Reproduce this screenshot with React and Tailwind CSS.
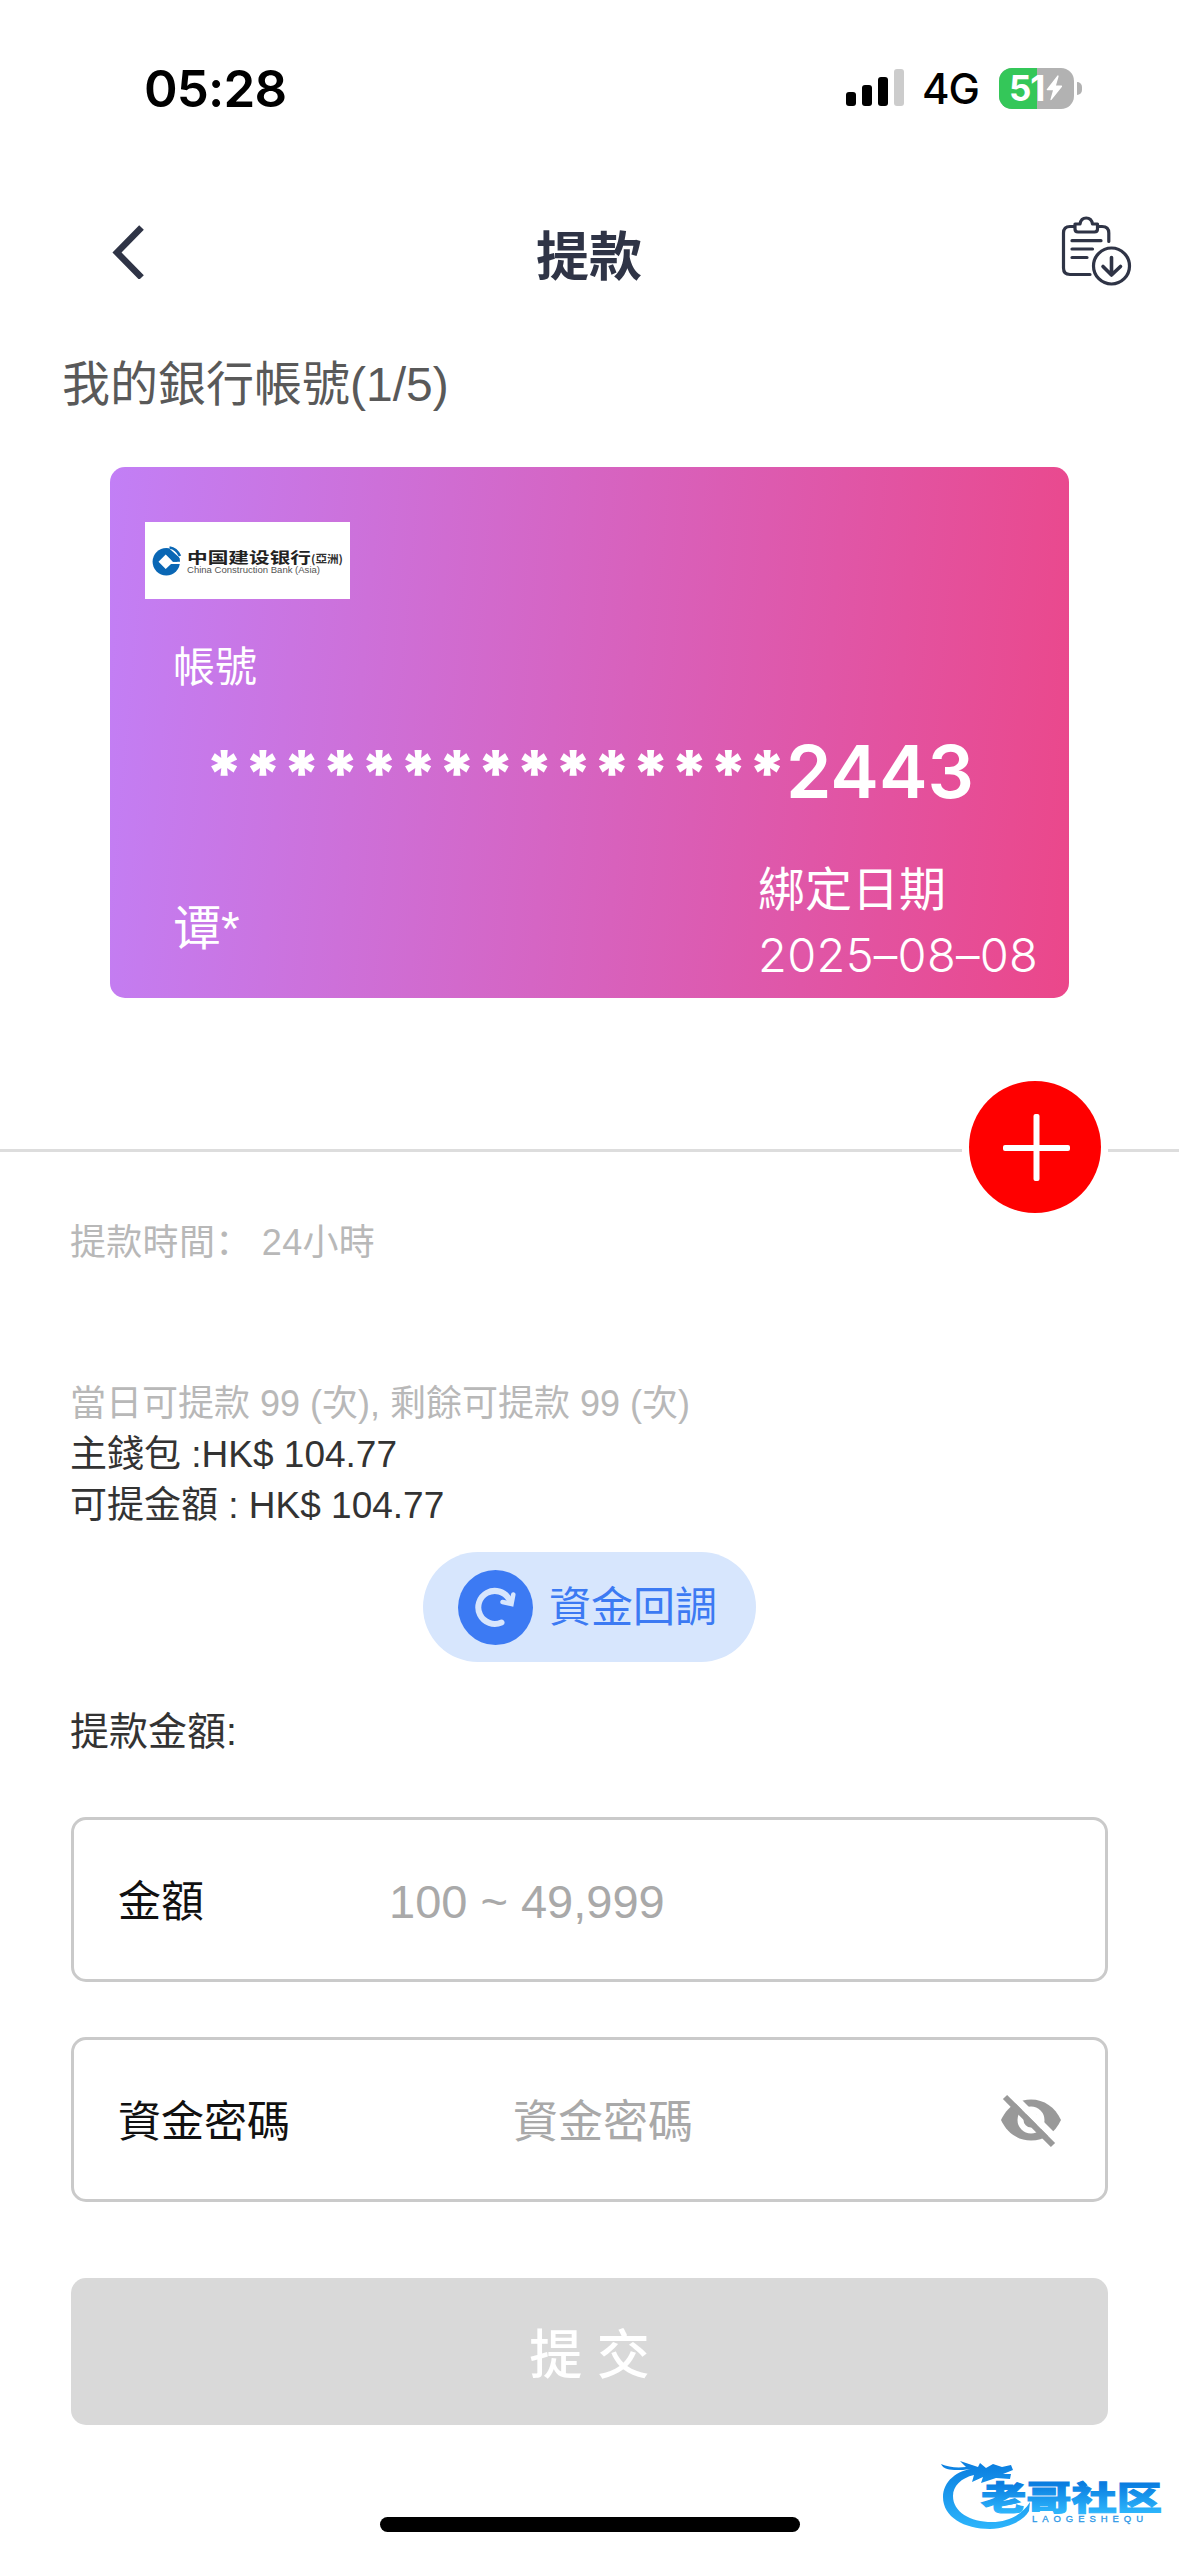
import React, { useState } from 'react';

const StatusBar = () => (
  <div className="h-[176px] shrink-0 flex justify-between pl-[144px] pr-[97px] pt-[62px] text-black font-['Inter']">
    <div className="h-[52px] flex items-center text-[51px] leading-none font-semibold tracking-[-0.8px]">05:28</div>
    <div className="h-[52px] flex items-center">
      <svg className="w-[60px] h-[40px] mr-[16px]" viewBox="0 0 60 40">
        <rect x="0" y="24" width="10" height="14" rx="3" />
        <rect x="16" y="17" width="10" height="21" rx="3" />
        <rect x="32" y="9" width="10" height="29" rx="3" />
        <rect x="48" y="1" width="10" height="37" rx="3" fill="#cccccc" />
      </svg>
      <span className="w-[77px] pt-[2px] text-[42px] leading-none font-medium tracking-[-1px]">4G</span>
      <div className="relative w-[75px] h-[41px] rounded-[13px] bg-[#b2b2b2] overflow-hidden">
        <div className="w-[38px] h-full bg-[#34c759]" />
        <div className="absolute inset-0 flex items-center pl-[10px] gap-[2px]">
          <span className="text-white text-[35px] leading-none font-bold tracking-[-1.2px]">51</span>
          <svg className="w-[17px] h-[26px]" viewBox="0 0 17 26" fill="#ffffff">
            <path d="M11.5 0.5 L0.8 14.2 Q0.3 15.2 1.4 15.2 L7 15.2 L4.4 24.4 Q4.6 25.8 5.6 24.8 L16 11.8 Q16.5 10.6 15.3 10.6 L10 10.6 L12.6 1.4 Q12.5 0 11.5 0.5Z" />
          </svg>
        </div>
      </div>
      <div className="w-[5px] h-[13px] ml-[3px] rounded-r-full bg-[#b2b2b2]" />
    </div>
  </div>
);

const RecordIcon = () => (
  <svg className="w-[72px] h-[72px]" viewBox="0 0 72 72" fill="none" stroke="#2f3446" strokeWidth="3.2" strokeLinecap="round" strokeLinejoin="round">
    <path d="M13 11.5 H9 Q2.5 11.5 2.5 18 V53 Q2.5 59.5 9 59.5 H29" />
    <path d="M37 11.5 H41 Q47.8 11.5 47.8 18 V26.5" />
    <path d="M14 9 H19 Q20 3 25.2 3 Q30.5 3 31.5 9 H36.5 V14 Q36.5 17 33.5 17 H17 Q14 17 14 14 Z" />
    <path d="M11 25.7 H40 M11 34 H31.5 M11 42.5 H26" />
    <circle cx="50.5" cy="51" r="18" />
    <path d="M50.5 42.5 V60 M42 51.5 L50.5 60 L59.5 51.5" strokeWidth="3.6" />
  </svg>
);

const Header = () => (
  <div className="h-[150px] shrink-0 flex items-center pl-[110px] pr-[46px]">
    <svg className="w-[90px] h-[56px]" viewBox="0 0 90 56" fill="none" stroke="#2f3446" strokeWidth="6.5">
      <path d="M31.5 4.5 L7 29.5 L31.5 54.5" />
    </svg>
    <h1 className="flex-1 pr-[83px] pt-[12px] text-center text-[53px] leading-none font-bold text-[#2f3446]">提款</h1>
    <RecordIcon />
  </div>
);

const BankLogo = () => (
  <svg className="w-[205px] h-[77px] bg-white" viewBox="0 0 205 77">
    <circle cx="21.3" cy="39.7" r="13.7" fill="#0a67b5" />
    <path d="M20.7 32.5 L28 39.7 L37 39.7 L37 42 L26 42 L20.7 47 L13.5 39.7 Z" fill="#ffffff" />
    <path d="M22 24.5 L36 37 L37 24 Z" fill="#ffffff" />
    <path d="M17.5 27.5 L23 27 L34.5 36.5 L32 39.7 L28 39.7 Z" fill="#0a67b5" />
    <path d="M24.5 25.5 Q31.5 26.5 35 34" fill="none" stroke="#0a67b5" strokeWidth="2.6" />
    <text x="42" y="41" fontSize="15" fontWeight="700" fill="#222222" textLength="124" lengthAdjust="spacingAndGlyphs" className="font-['Noto_Sans_CJK_SC']">中国建设银行</text>
    <text x="166" y="41" fontSize="11" fontWeight="600" fill="#333333" textLength="32" lengthAdjust="spacingAndGlyphs" className="font-['Noto_Sans_CJK_TC']">(亞洲)</text>
    <text x="42" y="50.7" fontSize="9.5" fill="#555555" textLength="133" lengthAdjust="spacingAndGlyphs" className="font-['Liberation_Sans']">China Construction Bank (Asia)</text>
  </svg>
);

const BankCard = ({ lastDigits, owner, date }) => (
  <div className="w-[959px] h-[531px] ml-[110px] shrink-0 rounded-[15px] flex flex-col text-white bg-[linear-gradient(95deg,#c27ff6,#eb478a)]">
    <div className="pl-[35px] pt-[55px] h-[132px]">
      <BankLogo />
    </div>
    <div className="h-[134px] pl-[63px] pt-[48px] text-[42px] leading-[42px]">帳號</div>
    <div className="h-[76px] pl-[95px] flex items-center font-['Inter'] font-semibold">
      <span className="w-[581px] h-[59px] text-[63px] leading-none font-black whitespace-nowrap [word-spacing:-12.1px]">{Array(15).fill('*').join(' ')}</span>
      <span className="text-[73px] leading-none">{lastDigits}</span>
    </div>
    <div className="flex-1 pl-[63px] pr-[27px] flex justify-between">
      <div className="pt-[96px] text-[48px] leading-[48px]">{owner}</div>
      <div className="w-[284px] pt-[49px]">
        <div className="h-[64px] text-[47px] leading-[64px]">綁定日期</div>
        <div className="h-[66px] text-[47px] leading-[66px] whitespace-nowrap tracking-[0.3px] font-[350] font-['Inter']">{date}</div>
      </div>
    </div>
  </div>
);

const AddDivider = () => (
  <div className="h-[146px] mt-[76px] shrink-0 flex items-center">
    <div className="w-[962px] h-[3px] mt-[7px] bg-[#dddddd]" />
    <button className="w-[132px] h-[132px] mx-[7px] rounded-full bg-[#ff0000] flex items-center justify-center">
      <svg className="w-[68px] h-[68px] ml-[4px] mt-[2px]" viewBox="0 0 68 68" fill="#ffffff">
        <rect x="0" y="31" width="67" height="6" rx="2" />
        <rect x="30.5" y="0" width="6" height="67" rx="2" />
      </svg>
    </button>
    <div className="flex-1 h-[3px] mt-[7px] bg-[#dddddd]" />
  </div>
);

const Watermark = () => (
  <svg className="absolute left-[936px] top-[2450px] w-[240px] h-[86px]" viewBox="0 0 240 86">
    <defs>
      <linearGradient id="wm" x1="0" y1="14" x2="0" y2="78" gradientUnits="userSpaceOnUse">
        <stop offset="0" stopColor="#0b7fe0" />
        <stop offset="1" stopColor="#2cb4fb" />
      </linearGradient>
      <linearGradient id="wmText" x1="0" y1="34" x2="0" y2="62" gradientUnits="userSpaceOnUse">
        <stop offset="0" stopColor="#0a7de0" />
        <stop offset="1" stopColor="#2cb4fb" />
      </linearGradient>
    </defs>
    <path d="M40 18 C20 20 7 32 7 47 C7 67 28 79 54 79 C74 78 88 70 93 61 L94 52 C86 65 72 72 56 72 C34 72 17 62 17 46 C17 36 25 28 38 25 L36 32 L47 27 L45 33 L60 28 L74 29 L75 24 L67 24 L77 20 L75 15 L66 17 L57 14 L50 18 L44 13 L42 17 L24 11 L30 17 C20 18 12 17 5 14 C8 21 18 20 27 20 Z" fill="url(#wm)" />
    <text x="45" y="59.5" fontSize="33" fontWeight="900" fill="url(#wmText)" stroke="url(#wmText)" strokeWidth="1" textLength="181" lengthAdjust="spacingAndGlyphs" className="font-['Noto_Sans_CJK_SC']">老哥社区</text>
    <text x="96" y="72" fontSize="9.5" fill="#2b97e6" stroke="#2b97e6" strokeWidth="0.3" textLength="111" className="font-['Liberation_Sans']">LAOGESHEQU</text>
  </svg>
);

const App = () => {
  const [amount, setAmount] = useState('');
  const [password, setPassword] = useState('');
  const [showPassword, setShowPassword] = useState(false);

  return (
    <div className="relative w-[1179px] h-[2556px] overflow-hidden flex flex-col bg-white font-['Liberation_Sans','Noto_Sans_CJK_TC',sans-serif]">
      <StatusBar />
      <Header />
      <div className="h-[141px] shrink-0 pl-[62px] pt-[35px] text-[48px] leading-[48px] text-[#595959]">我的銀行帳號(1/5)</div>

      <BankCard lastDigits="2443" owner="谭*" date="2025–08–08" />
      <AddDivider />

      <div className="h-[317px] shrink-0 px-[70px] text-[36px] text-[#b8b8b8]">
        <div className="h-[158px] leading-[38px] tracking-[0.3px]">
          提款時間<span className="font-['Noto_Sans_CJK_SC']">：</span> 24小時
        </div>
        <div className="leading-[51px]">當日可提款 99 (次), 剩餘可提款 99 (次)</div>
        <div className="text-[37px] leading-[51px] text-[#333333]">主錢包 :HK$ 104.77</div>
        <div className="text-[37px] leading-[51px] text-[#333333]">可提金額 : HK$ 104.77</div>
      </div>

      <button className="w-[333px] h-[110px] mt-[15px] mx-auto shrink-0 rounded-full bg-[#d7e6fd] flex items-center pl-[35px] text-[42px] text-[#3c7af3]">
        <svg className="w-[75px] h-[75px] mr-[16px]" viewBox="0 0 75 75" fill="none" stroke="#d7e6fd" strokeWidth="6" strokeLinecap="round">
          <circle cx="37.5" cy="37.5" r="37.5" fill="#3c7af3" stroke="none" />
          <path d="M43.5 52.5 A16.5 16.5 0 1 1 51 29" />
          <path d="M55.3 24.5 L53.5 34 L44.5 32" strokeWidth="4.5" />
        </svg>
        <span className="pt-[1px]">資金回調</span>
      </button>

      <div className="h-[155px] shrink-0 pl-[70px] pt-[48px] text-[39px] leading-[44px] text-[#333333]">提款金額:</div>

      <div className="shrink-0 px-[71px] flex flex-col gap-[55px]">
        <label className="h-[165px] flex items-center rounded-[15px] border-[3px] border-[#cacaca] pl-[44px] pr-[43px] pt-[5px]">
          <span className="w-[271px] text-[43px] text-[#111111]">金額</span>
          <input
            type="text"
            value={amount}
            onChange={(e) => setAmount(e.target.value)}
            placeholder="100 ~ 49,999"
            className="flex-1 min-w-0 text-[47px] outline-none placeholder:text-[#a9a9a9]"
          />
        </label>
        <label className="h-[165px] flex items-center rounded-[15px] border-[3px] border-[#cacaca] pl-[44px] pr-[42px]">
          <span className="w-[395px] pt-[5px] text-[43px] text-[#111111]">資金密碼</span>
          <input
            type={showPassword ? 'text' : 'password'}
            value={password}
            onChange={(e) => setPassword(e.target.value)}
            placeholder="資金密碼"
            className="flex-1 min-w-0 pt-[7px] text-[45px] outline-none placeholder:text-[#a9a9a9]"
          />
          <svg onClick={() => setShowPassword(!showPassword)} className="w-[64px] h-[56px]" viewBox="0 0 64 56">
            <path d="M2 28 C8 15 19 7.5 32 7.5 C45 7.5 56 15 62 28 C56 41 45 48.5 32 48.5 C19 48.5 8 41 2 28Z" fill="#999999" />
            <circle cx="32" cy="28" r="10.5" fill="#999999" stroke="#ffffff" strokeWidth="6" />
            <path d="M10 0 L60 50" stroke="#ffffff" strokeWidth="7" />
            <path d="M6 5 L54 53" stroke="#999999" strokeWidth="6" />
          </svg>
        </label>
      </div>

      <button className="w-[1037px] h-[147px] mt-[76px] mx-auto pt-[8px] shrink-0 rounded-[15px] bg-[#d9d9d9] text-white text-[53px] font-medium">
        提 交
      </button>

      <div className="w-[420px] h-[15px] mt-[92px] mx-auto shrink-0 rounded-full bg-black" />
      <Watermark />
    </div>
  );
};

export default App;
